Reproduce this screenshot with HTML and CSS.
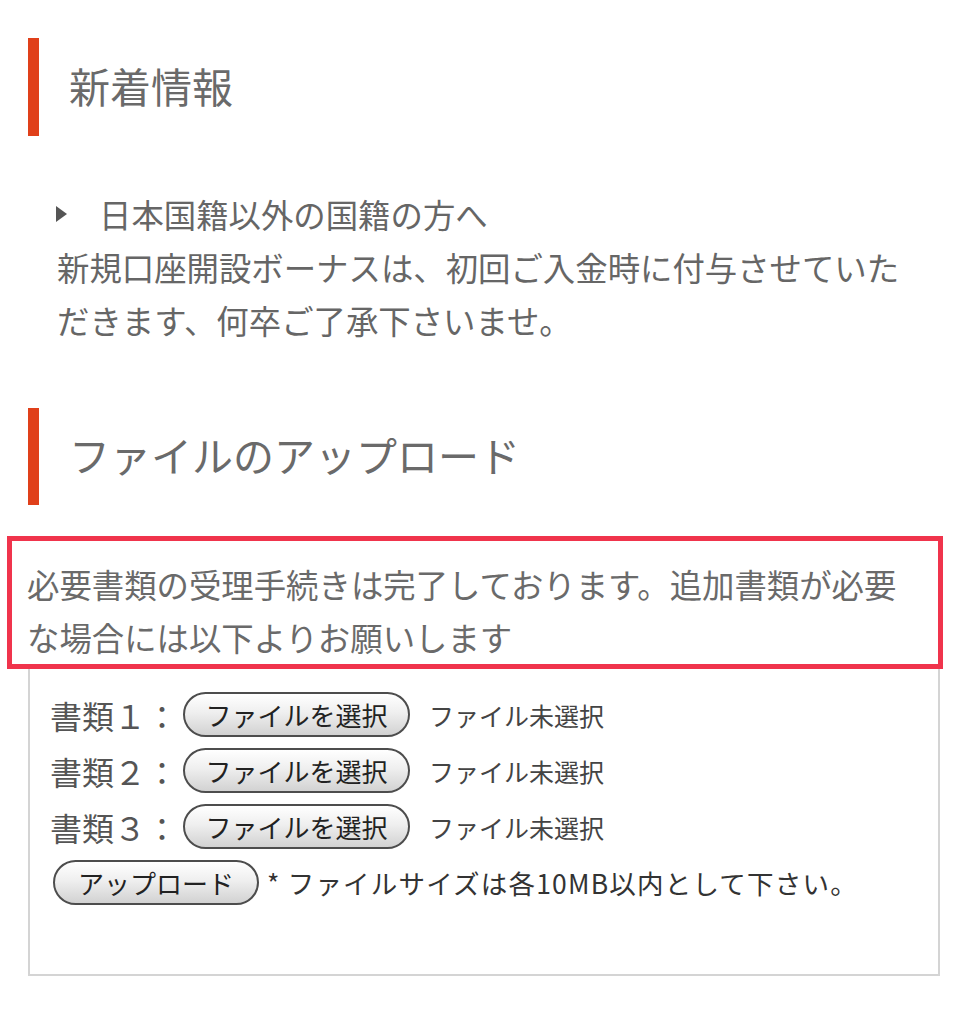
FILE: index.html
```html
<!DOCTYPE html>
<html lang="ja">
<head>
  <meta charset="UTF-8">
  <meta name="viewport" content="width=device-width, initial-scale=1.0">
  <title>マイページ</title>
  <link rel="stylesheet" href="styles.css">
</head>
<body>
  <!-- 新着情報 -->
  <h2 class="section-title">新着情報</h2>
  <div class="news">
    <div class="news-item"><span class="arrow"></span>日本国籍以外の国籍の方へ</div>
    <p class="news-text">新規口座開設ボーナスは、初回ご入金時に付与させていただきます、何卒ご了承下さいませ。</p>
  </div>

  <!-- ファイルのアップロード -->
  <h2 class="section-title upload-title">ファイルのアップロード</h2>
  <div class="notice">必要書類の受理手続きは完了しております。追加書類が必要な場合には以下よりお願いします</div>

  <div class="upload-box">
    <div class="file-row">
      <span class="file-label">書類１：</span>
      <button class="btn file-btn">ファイルを選択</button>
      <span class="file-name">ファイル未選択</span>
    </div>
    <div class="file-row">
      <span class="file-label">書類２：</span>
      <button class="btn file-btn">ファイルを選択</button>
      <span class="file-name">ファイル未選択</span>
    </div>
    <div class="file-row">
      <span class="file-label">書類３：</span>
      <button class="btn file-btn">ファイルを選択</button>
      <span class="file-name">ファイル未選択</span>
    </div>
    <div class="file-row submit-row">
      <button class="btn submit-btn">アップロード</button>
      <span class="size-note">* ファイルサイズは各10MB以内として下さい。</span>
    </div>
  </div>
</body>
</html>
```

FILE: styles.css
```css
body {
  margin: 0;
  padding: 0;
  font-family: "Noto Sans CJK JP", "Noto Sans", sans-serif;
  color: #666;
  background: #fff;
}

/* section headings with orange bar */
.section-title {
  margin: 38px 0 0 28px;
  height: 98px;
  border-left: 11px solid #e0401a;
  padding-left: 30px;
  padding-bottom: 4px;
  box-sizing: border-box;
  display: flex;
  align-items: center;
  font-size: 41px;
  font-weight: normal;
  color: #6a6a6a;
  line-height: 1;
}

.upload-title {
  margin-top: 62px;
  height: 97px;
}

.news {
  margin: 51px 46px 0 57px;
  font-size: 32.4px;
  line-height: 53px;
}

.news-item {
  display: flex;
  align-items: center;
}

.arrow {
  width: 0;
  height: 0;
  margin: 0 32px 0 -1px;
  border-top: 8px solid transparent;
  border-bottom: 8px solid transparent;
  border-left: 11px solid #555;
}

.news-text {
  margin: 0;
}

/* red notice box */
.notice {
  margin: 31px 20px 0 7px;
  border: 5px solid #f0344c;
  padding: 16px 15px 1px 15px;
  font-size: 32.4px;
  line-height: 53px;
  color: #6a6a6a;
}

.upload-box {
  margin: 0 23px 0 28px;
  border: 2px solid #d4d4d4;
  border-top: none;
  padding: 23px 20px 69px 20px;
  display: flex;
  flex-direction: column;
  gap: 11px;
}

.file-row {
  display: flex;
  align-items: center;
  height: 45px;
}

.file-label {
  font-size: 32px;
  color: #555;
  width: 133px;
  line-height: 1;
}

.btn {
  height: 45px;
  border: 2px solid #4d4d4d;
  border-radius: 23px;
  background: linear-gradient(to bottom, #ffffff 0%, #efefef 45%, #d2d2d2 100%);
  font-family: inherit;
  font-size: 26px;
  color: #222;
  padding: 0;
  line-height: 1;
  cursor: pointer;
}

.file-btn {
  width: 227px;
}

.file-name {
  margin-left: 19px;
  font-size: 25px;
  color: #444;
}

.submit-btn {
  width: 206px;
  margin-left: 3px;
}

.size-note {
  margin-left: 8px;
  font-size: 26.5px;
  letter-spacing: 1.2px;
  color: #333;
}
```
